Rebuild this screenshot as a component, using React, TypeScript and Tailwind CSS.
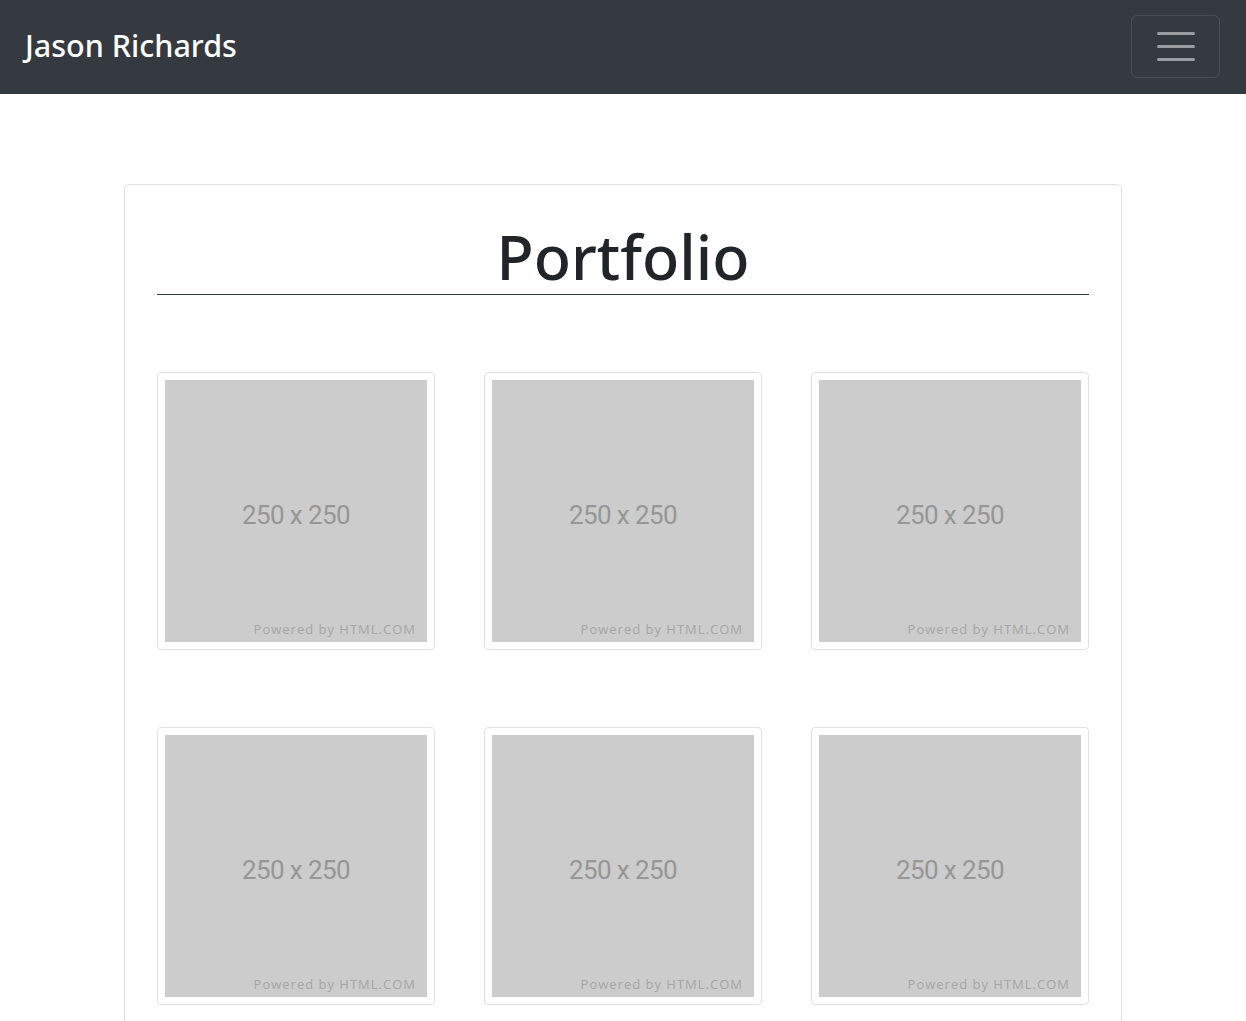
const Thumb = () => (
  <div className="rounded border border-[#dee2e6] bg-white p-[7px]">
    <div className="relative flex h-[262px] items-center justify-center bg-[#cccccc] pt-[8px]">
      <span className="font-['Roboto',sans-serif] text-[26px] tracking-[-0.6px] text-[#969696]">
        250 x 250
      </span>
      <span className="absolute bottom-[3px] right-[11px] font-['Open_Sans',sans-serif] text-[13px] tracking-[1px] text-[#a6a6a6]">
        Powered by HTML.COM
      </span>
    </div>
  </div>
);

export default function App() {
  return (
    <div className="min-h-screen bg-white font-['Noto_Sans',sans-serif]">
      <nav className="flex h-[94px] items-center justify-between bg-[#343a40] pl-[25px] pr-[26px]">
        <span className="-mt-[4px] text-[30.5px] font-medium leading-none text-white">Jason Richards</span>
        <button className="-mt-[2px] flex h-[63px] w-[89px] flex-col items-center justify-center gap-[10px] rounded-md border border-white/10">
          <span className="block h-[3px] w-[38px] rounded-full bg-[#9a9da1]" />
          <span className="block h-[3px] w-[38px] rounded-full bg-[#9a9da1]" />
          <span className="block h-[3px] w-[38px] rounded-full bg-[#9a9da1]" />
        </button>
      </nav>
      <main className="px-[124px] pt-[90px]">
        <div className="rounded-md border border-[#dfdfdf] px-[32px] pb-[40px] pt-[35px]">
          <h1 className="border-b border-[#343a40] pb-[1px] text-center text-[61px] font-medium leading-[1.2] text-[#212529]">
            Portfolio
          </h1>
          <div className="mt-[77px] grid grid-cols-3 gap-x-[49px] gap-y-[77px]">
            {[0, 1, 2, 3, 4, 5].map((i) => (
              <Thumb key={i} />
            ))}
          </div>
        </div>
      </main>
    </div>
  );
}
